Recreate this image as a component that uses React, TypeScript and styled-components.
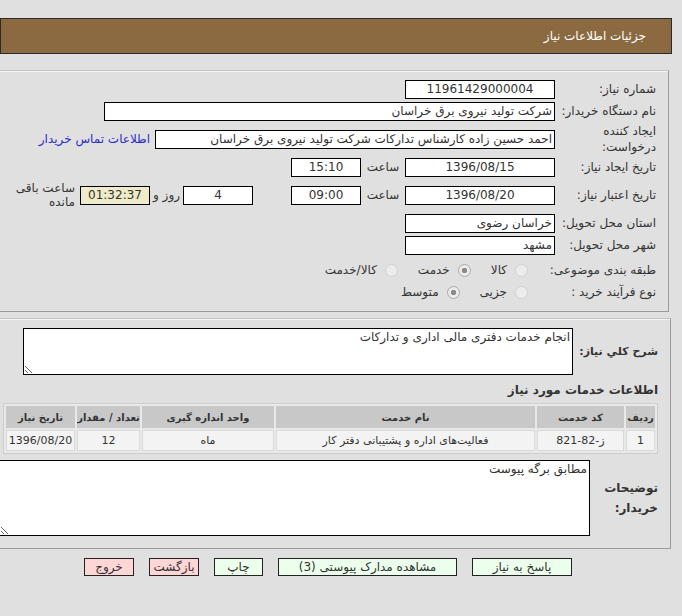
import React from 'react';
import styled, { createGlobalStyle, css } from 'styled-components';

const GlobalStyle = createGlobalStyle`
  body {
    margin: 0;
    background: #e0e0e0;
    font-family: "DejaVu Sans", "Liberation Sans", sans-serif;
    font-size: 12px;
    color: #333;
  }
`;

const Page = styled.div`
  direction: rtl;
  width: 682px;
  height: 616px;
  padding-top: 18px;
  box-sizing: border-box;
  overflow: hidden;
`;

const Header = styled.div`
  height: 36px;
  box-sizing: border-box;
  margin-right: 10px;
  border: 1px solid #2b2b2b;
  background: #8c6a41;
  color: #fff;
  display: flex;
  align-items: center;
  padding-right: 25px;
  font-size: 12px;
`;

const panel = css`
  border: 1px solid #9a9a9a;
  border-top-color: #c4c4c4;
  box-shadow: inset 1px 1px 0 #f4f4f4;
  margin-left: -2px;
`;

const InfoPanel = styled.div`
  ${panel};
  margin-top: 16px;
  margin-right: 13px;
  padding: 7px 12px 11px 0;
`;

const DetailPanel = styled.div`
  ${panel};
  margin-top: 6px;
  margin-right: 11px;
  padding: 9px 12px 12px 0;
`;

const Row = styled.div<{ $h: number; $top?: number }>`
  display: flex;
  align-items: center;
  height: ${p => p.$h}px;
  margin-top: ${p => p.$top ?? 0}px;
`;

const Label = styled.div`
  width: 98px;
  margin-left: 3px;
  line-height: 16px;
  white-space: nowrap;
  flex-shrink: 0;
`;

const Field = styled.div<{ $w: number; $center?: boolean; $bg?: string }>`
  box-sizing: border-box;
  width: ${p => p.$w}px;
  height: 19px;
  border: 1px solid #000;
  background: ${p => p.$bg ?? '#fff'};
  text-align: ${p => (p.$center ? 'center' : 'right')};
  padding: 0 2px;
  line-height: 17px;
  white-space: nowrap;
  overflow: hidden;
  flex-shrink: 0;
`;

const Caption = styled.div<{ $w: number }>`
  width: ${p => p.$w}px;
  text-align: center;
  white-space: nowrap;
  flex-shrink: 0;
`;

const Note = styled.div`
  width: 62px;
  margin-right: 5px;
  line-height: 14px;
`;

const Link = styled.a`
  margin-right: 5px;
  color: #2b2bc8;
  text-decoration: none;
  white-space: nowrap;
`;

const Gap = styled.div<{ $w: number }>`
  width: ${p => p.$w}px;
  flex-shrink: 0;
`;

const Radios = styled.div`
  display: flex;
  align-items: center;
  margin-right: 27px;
`;

const RadioItem = styled.div`
  display: flex;
  align-items: center;
  gap: 8px;
  margin-left: 20px;
`;

const Dot = styled.span<{ $on?: boolean }>`
  width: 11px;
  height: 11px;
  border-radius: 50%;
  border: 1px solid ${p => (p.$on ? '#a8a8a8' : '#d2d2d2')};
  background: ${p => (p.$on ? 'radial-gradient(circle, #8a8a8a 0 2.5px, #ececec 3px)' : '#ececec')};
  flex-shrink: 0;
`;

const BoldLabel = styled.div<{ $w: number; $size?: number }>`
  width: ${p => p.$w}px;
  font-weight: bold;
  font-size: ${p => p.$size ?? 11}px;
  line-height: 20px;
  white-space: nowrap;
  color: #333;
  flex-shrink: 0;
`;

const Area = styled.textarea<{ $w: number; $h: number }>`
  box-sizing: border-box;
  width: ${p => p.$w}px;
  height: ${p => p.$h}px;
  border: 1px solid #000;
  background: #fff;
  font-family: inherit;
  font-size: 12px;
  color: #333;
  padding: 1px 2px;
  margin: 0;
  direction: rtl;
  resize: both;
  outline: none;
`;

const Section = styled.div`
  margin-top: 8px;
  margin-bottom: 6px;
  font-weight: bold;
  font-size: 12px;
  line-height: 14px;
`;

const Table = styled.table`
  width: 655px;
  table-layout: fixed;
  border-collapse: separate;
  border-spacing: 2px;
  border: 1px solid #cdcdcd;
  background: #e8e8e8;
  font-size: 11px;
`;

const Th = styled.th`
  height: 22px;
  background: #c8c8c8;
  font-weight: bold;
  font-size: 10px;
  color: #333;
  padding: 0;
  white-space: nowrap;
  overflow: hidden;
`;

const Td = styled.td`
  height: 19px;
  background: #f3f3f3;
  border: 1px solid #dadada;
  text-align: center;
  padding: 0;
  white-space: nowrap;
  overflow: hidden;
`;

const Buttons = styled.div`
  display: flex;
  gap: 15px;
  margin-top: 9px;
  padding-right: 110px;
`;

const Button = styled.button<{ $w: number; $danger?: boolean }>`
  box-sizing: border-box;
  width: ${p => p.$w}px;
  height: 18px;
  padding: 0;
  border: 1px solid #222;
  background: ${p => (p.$danger ? '#ffd6d6' : '#ecffec')};
  font-family: inherit;
  font-size: 12px;
  line-height: 16px;
  color: #333;
`;

const Radio = ({ on, children }: { on?: boolean; children: React.ReactNode }) => (
  <RadioItem>
    <Dot $on={on} />
    <span>{children}</span>
  </RadioItem>
);

const rows = [
  { idx: '1', code: 'ز-82-821', name: 'فعالیت‌های اداره و پشتیبانی دفتر کار', unit: 'ماه', qty: '12', date: '1396/08/20' },
];

export default function App() {
  return (
    <Page>
      <GlobalStyle />
      <Header>جزئیات اطلاعات نیاز</Header>

      <InfoPanel>
        <Row $h={22}>
          <Label>شماره نیاز:</Label>
          <Field $w={150} $center>11961429000004</Field>
        </Row>
        <Row $h={22}>
          <Label>نام دستگاه خریدار:</Label>
          <Field $w={451}>شرکت تولید نیروی برق خراسان</Field>
        </Row>
        <Row $h={34}>
          <Label>
            ایجاد کننده
            <br />
            درخواست:
          </Label>
          <Field $w={400}>احمد حسین زاده کارشناس تدارکات شرکت تولید نیروی برق خراسان</Field>
          <Link href="#">اطلاعات تماس خریدار</Link>
        </Row>
        <Row $h={22}>
          <Label>تاریخ ایجاد نیاز:</Label>
          <Field $w={150} $center>1396/08/15</Field>
          <Caption $w={44}>ساعت</Caption>
          <Field $w={70} $center>15:10</Field>
        </Row>
        <Row $h={34}>
          <Label>تاریخ اعتبار نیاز:</Label>
          <Field $w={150} $center>1396/08/20</Field>
          <Caption $w={44}>ساعت</Caption>
          <Field $w={70} $center>09:00</Field>
          <Gap $w={38} />
          <Field $w={70} $center>4</Field>
          <Caption $w={33}>روز و</Caption>
          <Field $w={70} $center $bg="#efebc8">01:32:37</Field>
          <Note>
            ساعت باقی
            <br />
            مانده
          </Note>
        </Row>
        <Row $h={22}>
          <Label>استان محل تحویل:</Label>
          <Field $w={150}>خراسان رضوی</Field>
        </Row>
        <Row $h={22}>
          <Label>شهر محل تحویل:</Label>
          <Field $w={150}>مشهد</Field>
        </Row>
        <Row $h={28}>
          <Label>طبقه بندی موضوعی:</Label>
          <Radios>
            <Radio>کالا</Radio>
            <Radio on>خدمت</Radio>
            <Radio>کالا/خدمت</Radio>
          </Radios>
        </Row>
        <Row $h={16}>
          <Label>نوع فرآیند خرید :</Label>
          <Radios>
            <Radio>جزیی</Radio>
            <Radio on>متوسط</Radio>
          </Radios>
        </Row>
      </InfoPanel>

      <DetailPanel>
        <Row $h={47}>
          <BoldLabel $w={85}>شرح کلي نیاز:</BoldLabel>
          <Area $w={550} $h={47} readOnly defaultValue="انجام خدمات دفتری مالی اداری و تدارکات" />
        </Row>
        <Section>اطلاعات خدمات مورد نیاز</Section>
        <Table>
          <colgroup>
            <col style={{ width: 29 }} />
            <col style={{ width: 87 }} />
            <col />
            <col style={{ width: 132 }} />
            <col style={{ width: 63 }} />
            <col style={{ width: 69 }} />
          </colgroup>
          <thead>
            <tr>
              <Th>ردیف</Th>
              <Th>کد خدمت</Th>
              <Th>نام خدمت</Th>
              <Th>واحد اندازه گیری</Th>
              <Th>تعداد / مقدار</Th>
              <Th>تاریخ نیاز</Th>
            </tr>
          </thead>
          <tbody>
            {rows.map(r => (
              <tr key={r.idx}>
                <Td>{r.idx}</Td>
                <Td>{r.code}</Td>
                <Td>{r.name}</Td>
                <Td>{r.unit}</Td>
                <Td>{r.qty}</Td>
                <Td>{r.date}</Td>
              </tr>
            ))}
          </tbody>
        </Table>
        <Row $h={76} $top={6}>
          <BoldLabel $w={68} $size={12}>
            توضیحات
            <br />
            خریدار:
          </BoldLabel>
          <Area $w={591} $h={76} readOnly defaultValue="مطابق برگه پیوست" />
        </Row>
      </DetailPanel>

      <Buttons>
        <Button $w={100}>پاسخ به نیاز</Button>
        <Button $w={179}>مشاهده مدارک پیوستی (3)</Button>
        <Button $w={49}>چاپ</Button>
        <Button $w={50} $danger>بازگشت</Button>
        <Button $w={50} $danger>خروج</Button>
      </Buttons>
    </Page>
  );
}
